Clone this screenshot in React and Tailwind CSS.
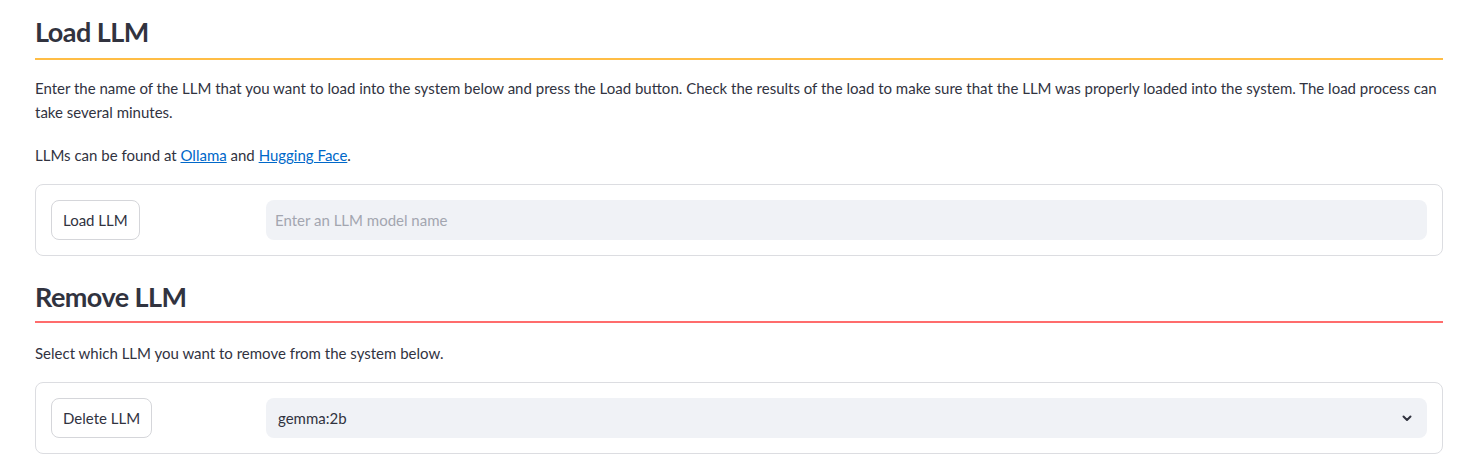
import React from "react";

const font = { fontFamily: "Lato, 'Noto Sans', sans-serif" };

function Section({ title, lineColor, children }) {
  return (
    <section>
      <h2 className={`text-[27px] leading-[33px] font-bold tracking-[-0.02em] text-[#31333f] border-b-2 ${lineColor}`}>{title}</h2>
      {children}
    </section>
  );
}

function Chevron() {
  return (
    <svg width="12" height="12" viewBox="0 0 12 12" fill="none" className="text-[#31333f]">
      <path d="M2.5 4.5 L6 8 L9.5 4.5" stroke="currentColor" strokeWidth="2" strokeLinecap="round" strokeLinejoin="round" />
    </svg>
  );
}

export default function App() {
  return (
    <div className="min-h-screen bg-white pl-[35px] pr-[37px] pt-[15px] text-[#31333f]" style={font}>
      <Section title="Load LLM" lineColor="border-[#ffbd45] pb-[10px]">
        <p className="mt-[16px] text-[15px] leading-[24px]">
          Enter the name of the LLM that you want to load into the system below and press the Load button. Check the results of the load to make sure that the LLM was properly loaded into the system. The load process can take several minutes.
        </p>
        <p className="mt-[19px] text-[15px] leading-[24px]">
          LLMs can be found at{" "}
          <a href="#" className="text-[#0068c9] underline">Ollama</a> and{" "}
          <a href="#" className="text-[#0068c9] underline">Hugging Face</a>.
        </p>
        <div className="mt-[17px] border border-[#dcdde1] rounded-lg p-[15px] flex items-center gap-4">
          <div className="w-[199px] shrink-0">
            <button className="h-[40px] px-[11px] border border-[#d5d6da] rounded-lg text-[15px] bg-white">Load LLM</button>
          </div>
          <div className="flex-1 h-[40px] bg-[#f0f2f6] rounded-lg flex items-center px-[9px] text-[15px] text-[#a3a6b0]">
            Enter an LLM model name
          </div>
        </div>
      </Section>

      <div className="mt-[24px]">
        <Section title="Remove LLM" lineColor="border-[#ff6c6c] pb-[8px]">
          <p className="mt-[18px] text-[15px] leading-[24px]">Select which LLM you want to remove from the system below.</p>
          <div className="mt-[17px] border border-[#dcdde1] rounded-lg p-[15px] flex items-center gap-4">
            <div className="w-[199px] shrink-0">
              <button className="h-[40px] px-[11px] border border-[#d5d6da] rounded-lg text-[15px] bg-white">Delete LLM</button>
            </div>
            <div className="flex-1 h-[40px] bg-[#f0f2f6] rounded-lg flex items-center justify-between pl-3 pr-[14px] text-[15px]">
              <span>gemma:2b</span>
              <Chevron />
            </div>
          </div>
        </Section>
      </div>
    </div>
  );
}
